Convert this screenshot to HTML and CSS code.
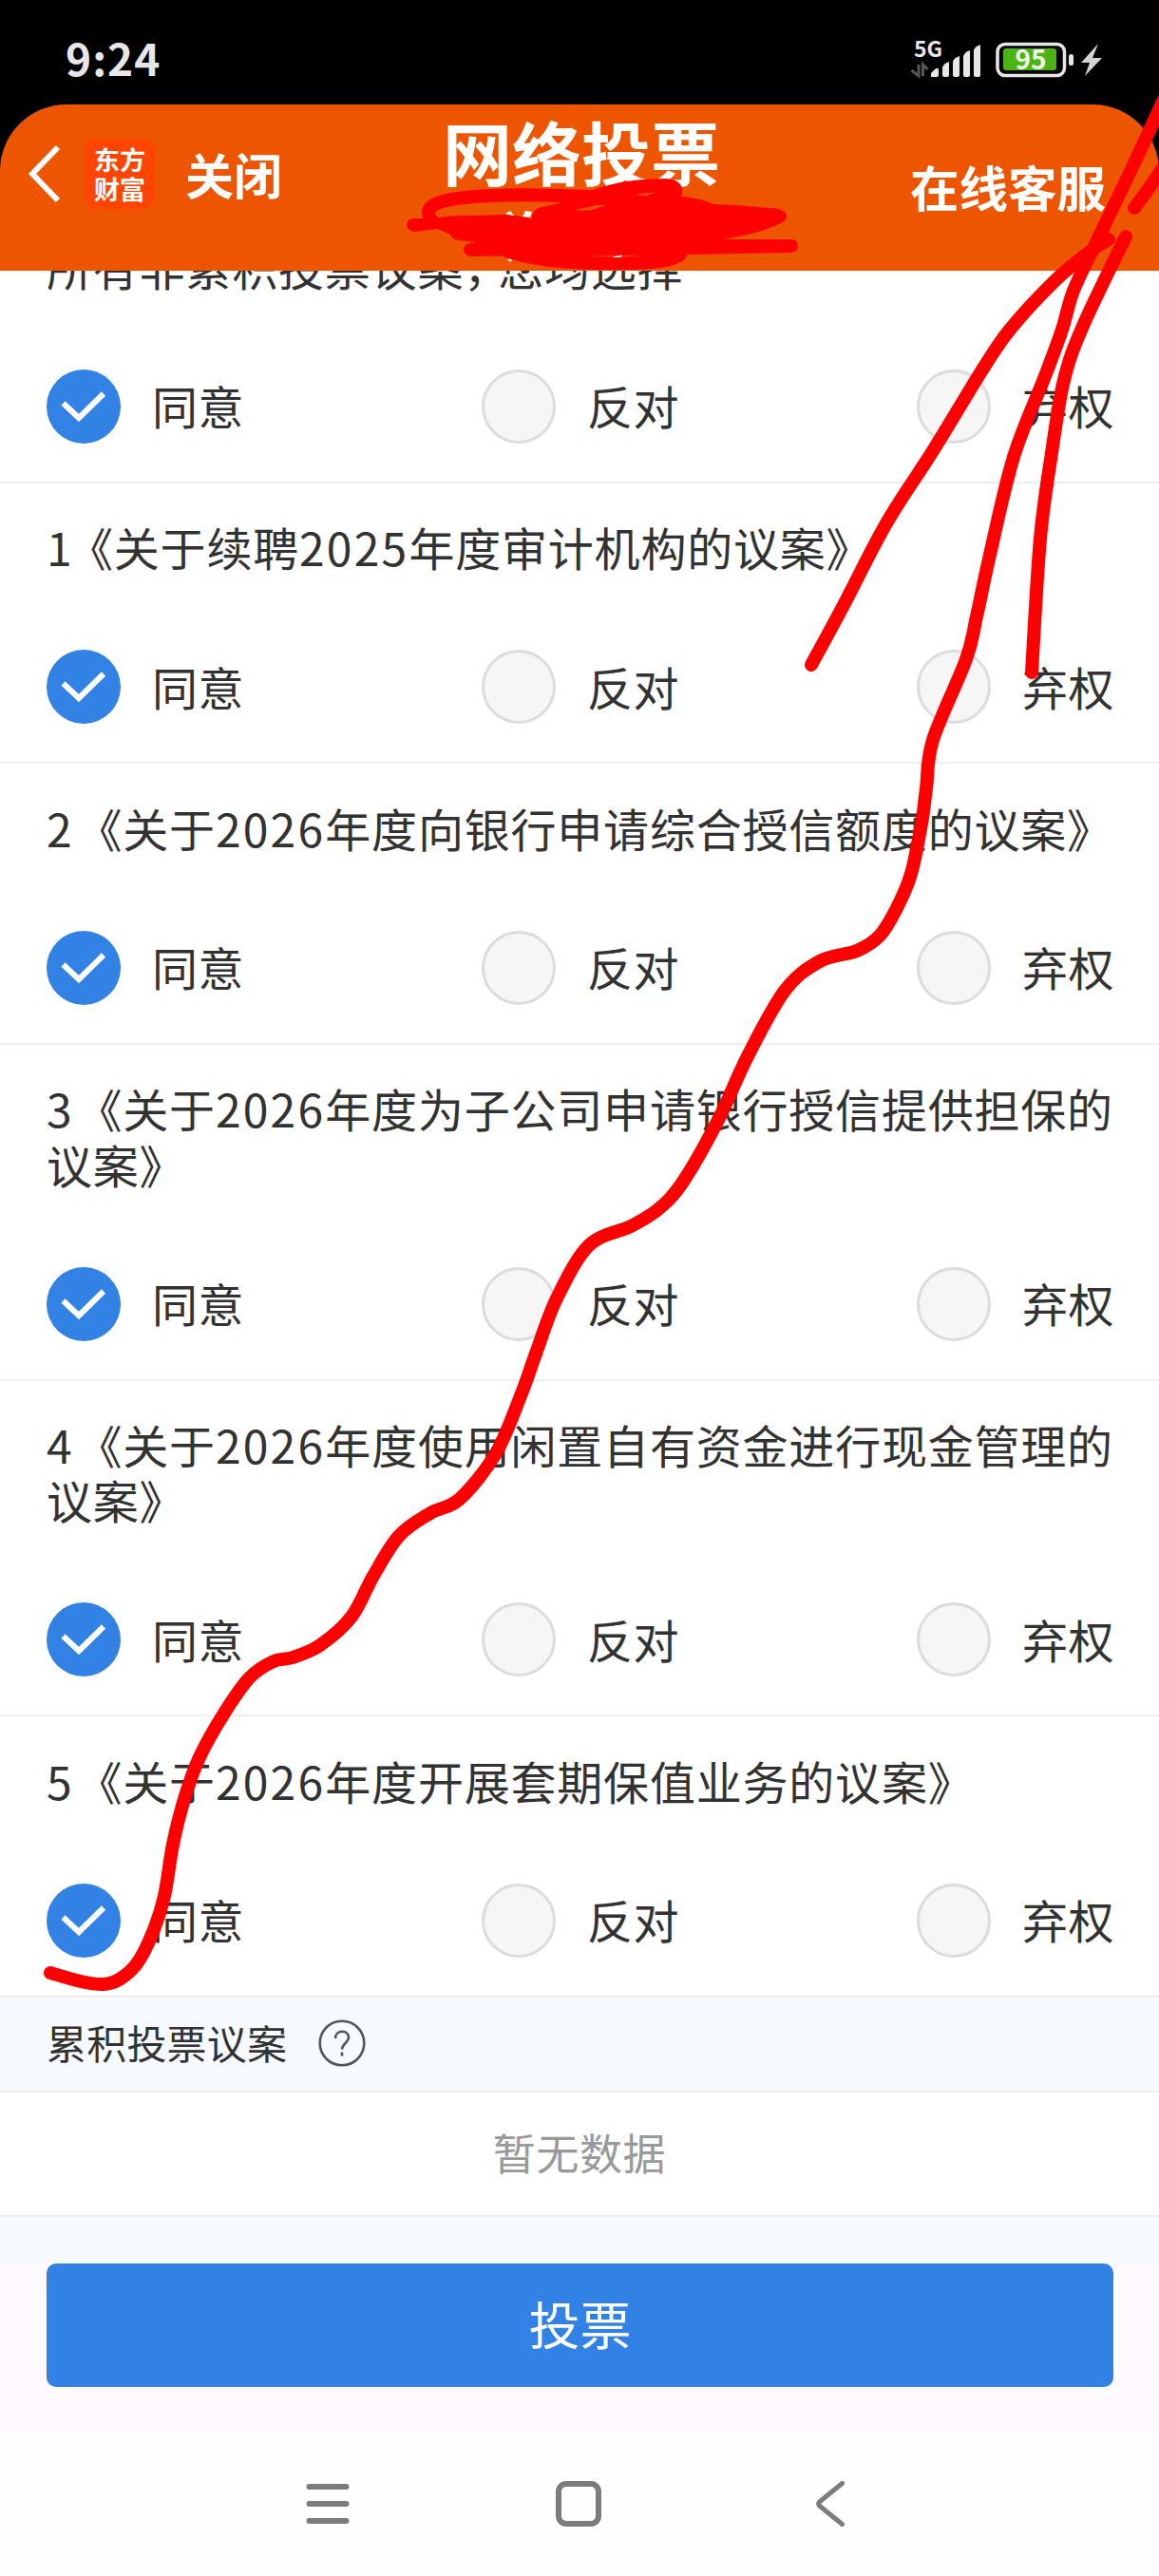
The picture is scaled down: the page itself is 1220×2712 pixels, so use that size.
FILE: index.html
```html
<!DOCTYPE html>
<html lang="zh-CN">
<head>
  <meta charset="UTF-8">
  <title>网络投票</title>
  <link rel="stylesheet" href="styles.css">
</head>
<body>
<div class="page">

  <!-- 状态栏 -->
  <div class="status">
    <span class="time">9:24</span>
    <svg class="status-icons" width="210" height="60" viewBox="950 35 210 60">
      <text x="962" y="60" class="net">5G</text>
      <path d="M967 68V80L959.500 74M971.500 80V68L976.500 73" fill="none" stroke="#555" stroke-width="3"/>
      <g fill="#e8e6e6">
        <path d="M980 81V77L984 73Q988 70 988 74V79Q988 81 986 81Z"/>
        <path d="M992 79V71Q993 67 999 65V79Q999 81 997 81H994Q992 81 992 79Z"/>
        <path d="M1003 79V65Q1004 61 1010 59V79Q1010 81 1008 81H1005Q1003 81 1003 79Z"/>
        <path d="M1014 79V59Q1015 55 1021 53V79Q1021 81 1019 81H1016Q1014 81 1014 79Z"/>
        <path d="M1025 79V53Q1026 49 1032 47V79Q1032 81 1030 81H1027Q1025 81 1025 79Z"/>
        <rect x="1125" y="57" width="5" height="12" rx="2.500"/>
      </g>
      <rect x="1050" y="46.500" width="70.500" height="33" rx="8" fill="none" stroke="#e8e6e6" stroke-width="3.500"/>
      <rect x="1056" y="51" width="56" height="23" rx="3" fill="#4bb315"/>
      <text x="1068.500" y="73" class="level">95</text>
      <path d="M1156 46L1138 66H1147L1142 80L1160 61H1150Z" fill="#d4d4d4"/>
    </svg>
  </div>

  <!-- 顶部导航 -->
  <div class="header">
    <div class="left">
      <svg width="38" height="64" viewBox="0 0 38 64"><path d="M34 4L7 32L34 60" fill="none" stroke="#fff" stroke-width="6"/></svg>
      <div class="logo"><span>东方</span><span>财富</span></div>
      <span class="close">关闭</span>
    </div>
    <div class="title">网络投票</div>
    <div class="service">在线客服</div>
  </div>

  <!-- 议案列表 -->
  <div class="list">
    <div class="item first">
      <div class="name">所有非累积投票议案<span class="comma">，</span>您均选择</div>
      <div class="options"></div>
    </div>
    <div class="item">
      <div class="name"><span class="num one">1</span>《关于续聘<span class="num">2025</span>年度审计机构的议案》</div>
      <div class="options"></div>
    </div>
    <div class="item">
      <div class="name"><span class="num no">2</span>《关于<span class="num">2026</span>年度向银行申请综合授信额度的议案》</div>
      <div class="options"></div>
    </div>
    <div class="item">
      <div class="name"><span class="num no">3</span>《关于<span class="num">2026</span>年度为子公司申请银行授信提供担保的<br>议案》</div>
      <div class="options"></div>
    </div>
    <div class="item">
      <div class="name"><span class="num no">4</span>《关于<span class="num">2026</span>年度使用闲置自有资金进行现金管理的<br>议案》</div>
      <div class="options"></div>
    </div>
    <div class="item">
      <div class="name"><span class="num no">5</span>《关于<span class="num">2026</span>年度开展套期保值业务的议案》</div>
      <div class="options"></div>
    </div>
  </div>

  <div class="section">
    <span>累积投票议案</span>
    <svg width="50" height="50" viewBox="0 0 50 50" fill="none" stroke="#555" stroke-width="2.600">
      <circle cx="25" cy="25" r="23.300"/>
      <path d="M18 20C18 10.500 32 10.500 32 19C32 24.500 25 25.500 25 31.500"/>
      <path d="M25 34.500V38.500"/>
    </svg>
  </div>
  <div class="empty">暂无数据</div>
  <div class="gap"></div>

  <div class="footer"><button class="submit">投票</button></div>

  <!-- 系统导航键 -->
  <div class="navbar">
    <svg width="46" height="50" viewBox="0 0 46 50" stroke="#7c7c7c" stroke-width="6" stroke-linecap="round"><path d="M3.500 7H42.500M3.500 25H42.500M3.500 43H42.500"/></svg>
    <svg width="50" height="50" viewBox="0 0 50 50"><rect x="4" y="4" width="42" height="42" rx="8" fill="none" stroke="#7c7c7c" stroke-width="6"/></svg>
    <svg width="32" height="50" viewBox="0 0 32 50"><path d="M28.500 3.500L5 22.500Q2.500 25 5 27.500L28.500 46.500" fill="none" stroke="#7c7c7c" stroke-width="5" stroke-linecap="round"/></svg>
  </div>

  <!-- 手绘标记 -->
  <svg class="marks" width="1220" height="2712" viewBox="0 0 1220 2712">
    <path fill="#fff" d="M534 273L540 272L537 276Z"/>
    <path fill="#f00" d="M450 230L480 227L530 226Q548 227 560 230Q559 219 575 217L600 211L640 203L690 206Q735 206 751 215L775 216L810 219Q829 220 828 228Q827 234 815 238Q795 247 760 252L833 252Q840 253 840 259Q840 265 832 266L723 268Q722 276 705 280Q690 284 660 284Q570 286 528 269.500L495 270Q488 268 488 263Q488 257 495 256L502 255L482 253Q476 252 474 247L460 241L436 244Q428 242 428 236Q429 230 436 230Z"/>
    <path fill="none" stroke="#f00" stroke-width="14" stroke-linecap="round" d="M454 230C440 212 480 207 530 205.500C570 204 600 207 625 207C650 198 675 195 700 195C718 195 715 210 690 209L625 212"/>
    <path fill="#ee5500" d="M605 221L629 216L638 216L623 221Q613 222 605 221ZM668 205L692 202L680 206ZM460 227Q455 227 461 224Q475 215 530 213L580 213Q564 217 560 222L559 230Q545 226 530 226ZM620 269.500L675 269L650 271Z"/>
    <path fill="#fff" d="M532 225L537 222L541 227ZM550 228L553 222L560 223L558 229Z"/>
    <path fill="#fff" d="M646 270L655 268.500L653 271H646Z"/>
  </svg>

</div>
<script src="script.js"></script>
</body>
</html>
```
FILE: styles.css
```css
body {
  margin: 0;
  background: #fff;
  font-family: "Noto Sans CJK SC", sans-serif;
  color: #323232;
}

.page {
  position: relative;
  width: 1220px;
  height: 2712px;
  overflow: hidden;
  background: #000;
}

/* 状态栏 */
.status {
  height: 110px;
  box-sizing: border-box;
  padding: 10px 60px 0 69px;
  display: flex;
  align-items: center;
  justify-content: space-between;
}

.time {
  color: #e8e6e6;
  font-size: 46px;
  font-weight: 700;
  letter-spacing: 1px;
  line-height: 60px;
}

.status-icons {
  margin-top: 10px;
}

.net {
  font-size: 23px;
  font-weight: 700;
  fill: #e8e6e6;
}

.level {
  font-size: 28px;
  font-weight: 700;
  fill: #efffe6;
}

/* 顶部导航 */
.header {
  height: 175px;
  box-sizing: border-box;
  padding: 0 56px 0 27px;
  display: grid;
  grid-template-columns: 439px auto 1fr;
  background: #ee5500;
  border-radius: 70px 70px 0 0;
  color: #fff;
  font-weight: 700;
}

.left {
  height: 146px;
  display: flex;
  align-items: center;
}

.logo {
  width: 74px;
  height: 74px;
  margin: 0 32px 0 24px;
  border-radius: 13px;
  background: #ff4500;
  display: flex;
  flex-direction: column;
  align-items: center;
  justify-content: center;
  font-size: 27px;
  line-height: 31px;
}

.close {
  font-size: 51px;
  line-height: 60px;
}

.title {
  font-size: 73px;
  line-height: 96px;
}

.service {
  text-align: right;
  font-size: 51.500px;
  line-height: 60px;
  padding-top: 56px;
}

/* 议案列表 */
.list {
  background: #fff;
  overflow: hidden;
}

.item {
  padding: 37.5px 49px 40px;
  border-bottom: 2px solid #eee;
}

.first {
  margin-top: -71.5px;
}

.name {
  font-size: 48px;
  letter-spacing: 0.8px;
  line-height: 58.4px;
  white-space: nowrap;
}

.num {
  letter-spacing: 2.2px;
}

.one {
  display: inline-block;
  width: 22px;
}

.no {
  display: inline-block;
  width: 31.5px;
}

.comma {
  letter-spacing: -12px;
}

.options {
  display: flex;
  justify-content: space-between;
  margin-top: 79.5px;
}

.option {
  display: flex;
  align-items: center;
  height: 78px;
  width: 206px;
  font-size: 48px;
  letter-spacing: 0.4px;
  line-height: 72px;
  white-space: nowrap;
}

.option span {
  margin: -3px 0 0 33px;
}

.radio {
  flex: none;
  width: 78px;
  height: 78px;
  box-sizing: border-box;
  border: 3px solid #dddbdc;
  border-radius: 50%;
  background: #f6f6f6;
}

.radio.checked {
  border: 0;
  background: #3282e6;
}

/* 累积投票 */
.section {
  height: 98px;
  padding: 0 49px;
  display: flex;
  align-items: center;
  gap: 33px;
  background: #f6faff;
  border-bottom: 2px solid #eee;
  font-size: 42px;
  letter-spacing: 0.2px;
}

.section span {
  margin-top: -4px;
}

.section svg {
  margin-top: -1px;
}

.empty {
  height: 129px;
  border-bottom: 2px solid #eee;
  background: #fff;
  color: #999;
  font-size: 45px;
  letter-spacing: 0.6px;
  line-height: 126px;
  text-align: center;
}

.gap {
  height: 49px;
  background: #f6faff;
}

.footer {
  height: 176px;
  padding: 0 48px 0 49px;
  background: #fffaff;
}

.submit {
  display: block;
  width: 100%;
  height: 130px;
  border: 0;
  padding: 0 0 4px;
  border-radius: 10px;
  background: #3282e6;
  color: #fff;
  font-family: inherit;
  font-size: 54px;
}

.navbar {
  height: 154px;
  display: grid;
  grid-template-columns: 262px 274px 1fr;
  align-items: center;
  background: #fefefe;
  padding-left: 322px;
}

.marks {
  position: absolute;
  left: 0;
  top: 0;
}
```
FILE: script.js
```js
// 每个议案的三个选项
document.querySelectorAll('.options').forEach(box => {
  ['同意', '反对', '弃权'].forEach((label, i) => {
    const check = '<svg width="78" height="78" viewBox="0 0 78 78"><path d="M17.5 35.5L34 51L60 25.500" fill="none" stroke="#fff" stroke-width="6"/></svg>';
    box.innerHTML += `<div class="option"><div class="radio${i === 0 ? ' checked' : ''}">${i === 0 ? check : ''}</div><span>${label}</span></div>`;
  });
});

// 箭头笔画经过的点
const strokes = [
  [[53,2077],[85,2086],[109,2089],[127,2083],[145,2066],[161,2034],[173,1996],[182,1942],[194,1894],[210,1850],[237,1802],[263,1766],[288,1749],[308,1745],[337,1732],[370,1702],[393,1659],[420,1617],[453,1593],[484,1578],[522,1530],[549,1467],[564,1425],[586,1367],[620,1311],[664,1291],[693,1273],[719,1244],[756,1179],[787,1112],[826,1043],[863,1012],[902,1001],[926,985],[944,956],[959,920],[970,867],[975,830],[982,779],[1017,694],[1028,649],[1042,584],[1067,481],[1100,396],[1118,347],[1130,306],[1155,253],[1190,180],[1225,105]],
  [[1194,219],[1206,203],[1226,174]],
  [[854,700],[887,639],[933,551],[983,473],[1033,391],[1063,347],[1110,296],[1147,265],[1167,252]],
  [[1086,708],[1095,567],[1107,477],[1120,400],[1140,343],[1185,249]]
];

const marks = document.querySelector('.marks');
strokes.forEach(p => {
  let d = `M${p[0]}`;
  for (let i = 0; i < p.length - 1; i++) {
    const a = p[i - 1] || p[i], b = p[i], c = p[i + 1], e = p[i + 2] || c;
    d += `C${b[0] + (c[0] - a[0]) / 6} ${b[1] + (c[1] - a[1]) / 6} ${c[0] - (e[0] - b[0]) / 6} ${c[1] - (e[1] - b[1]) / 6} ${c}`;
  }
  const path = document.createElementNS('http://www.w3.org/2000/svg', 'path');
  path.setAttribute('d', d);
  path.setAttribute('fill', 'none');
  path.setAttribute('stroke', '#f00');
  path.setAttribute('stroke-width', 14);
  path.setAttribute('stroke-linecap', 'round');
  marks.appendChild(path);
});
```
